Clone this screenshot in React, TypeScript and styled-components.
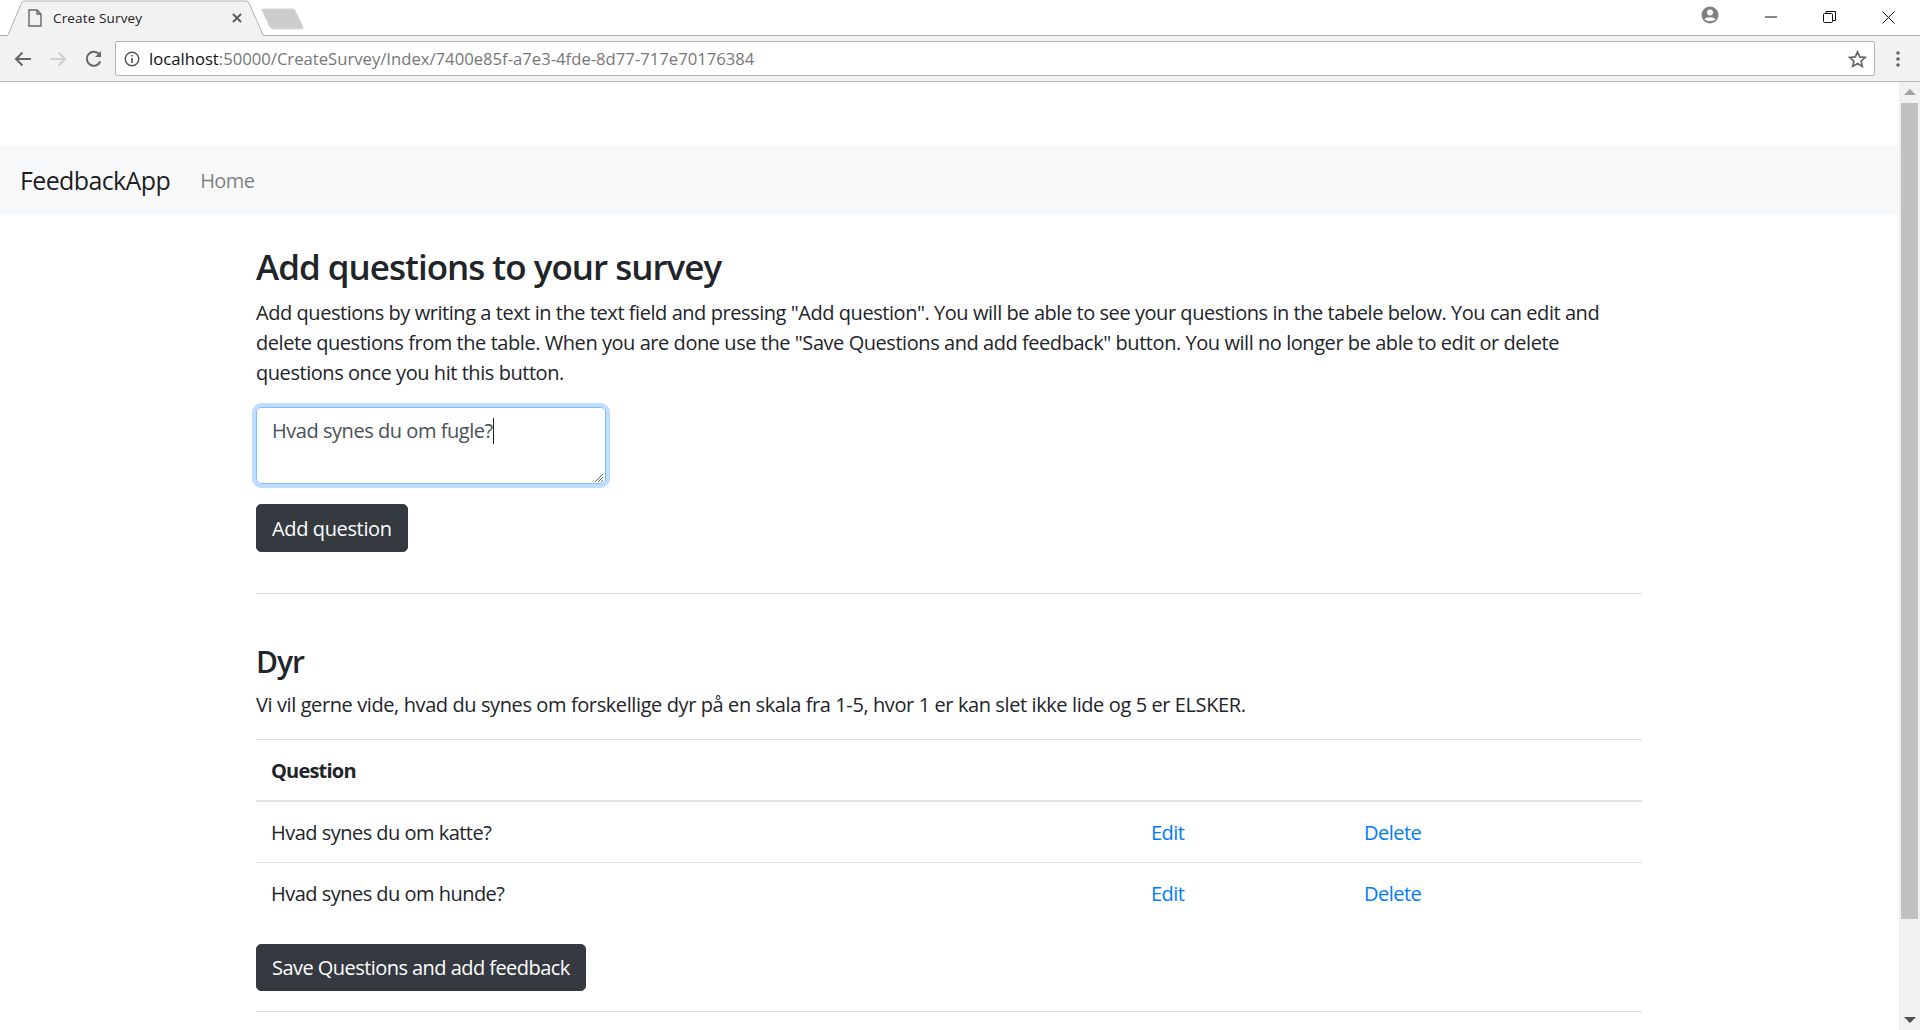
import * as React from 'react';
import styled, { createGlobalStyle } from 'styled-components';

const GlobalStyle = createGlobalStyle`
  html, body {
    margin: 0;
    padding: 0;
    height: 100%;
    overflow: hidden;
    background: #fff;
  }
  * { box-sizing: border-box; }
  body {
    font-family: "Open Sans", "Noto Sans", "Liberation Sans", sans-serif;
    color: #212529;
  }
`;

const Window = styled.div`
  display: flex;
  flex-direction: column;
  width: 1920px;
  height: 1030px;
  overflow: hidden;
`;

const TabStrip = styled.div`
  display: flex;
  align-items: flex-start;
  height: 36px;
  border-bottom: 1px solid #b0b0b0;
  background: #fff;
  flex: none;
`;

const Tab = styled.div`
  position: relative;
  display: flex;
  align-items: center;
  width: 257px;
  height: 36px;
  margin-left: 7px;
  padding: 0 22px 0 21px;
  font-size: 13.5px;
  letter-spacing: 0.15px;
  color: #222;
`;

const TabShape = styled.svg`
  position: absolute;
  left: 0;
  top: 0;
`;

const TabContent = styled.div`
  position: relative;
  display: flex;
  align-items: center;
  width: 100%;
  gap: 11px;
`;

const TabTitle = styled.span`
  flex: 1;
`;

const NewTab = styled.svg`
  margin: 8px 0 0 -3px;
`;

const Spacer = styled.div`
  flex: 1;
`;

const WindowControls = styled.div`
  display: flex;
  align-items: center;
  height: 34px;
  padding-right: 25px;
`;

const ControlSlot = styled.div<{ $gap: number }>`
  display: flex;
  align-items: center;
  justify-content: center;
  margin-left: ${(p) => p.$gap}px;
  width: 14px;
  height: 32px;
`;

const AccountSlot = styled.div`
  width: 18px;
  height: 18px;
  margin-bottom: 5px;
`;

const Toolbar = styled.div`
  display: flex;
  align-items: center;
  height: 46px;
  flex: none;
  background: #f2f2f2;
  border-bottom: 1px solid #b8b8b8;
`;

const NavButtons = styled.div`
  display: flex;
  align-items: center;
  gap: 17px;
  padding-left: 14px;
  width: 115px;
`;

const AddressBar = styled.div`
  display: flex;
  align-items: center;
  width: 1760px;
  height: 35px;
  background: #fff;
  border: 1px solid #b4b4b4;
  border-radius: 2px;
  padding: 0 7px 0 8px;
  gap: 9px;
  font-size: 16.67px;
`;

const Url = styled.div`
  flex: 1;
  color: #777;
  white-space: nowrap;
`;

const UrlHost = styled.span`
  color: #111;
`;

const MenuSlot = styled.div`
  display: flex;
  justify-content: center;
  flex: 1;
`;

const Viewport = styled.div`
  display: flex;
  flex: 1;
  min-height: 0;
`;

const Page = styled.div`
  flex: 1;
  min-width: 0;
  padding-top: 63px;
  font-size: 20px;
  line-height: 30px;
`;

const NavBar = styled.nav`
  display: flex;
  align-items: center;
  height: 70px;
  padding: 0 20px;
  background: #f8f9fa;
`;

const Brand = styled.a`
  font-size: 25px;
  letter-spacing: -0.62px;
  color: rgba(0, 0, 0, 0.9);
  margin-right: 30px;
`;

const NavLink = styled.a`
  font-size: 20px;
  letter-spacing: -0.6px;
  margin-top: 2px;
  color: rgba(0, 0, 0, 0.5);
`;

const Container = styled.main`
  width: 1386px;
  margin-left: 256px;
  padding-top: 31px;
`;

const Title = styled.h1`
  margin: 0 0 10px;
  font-size: 35px;
  line-height: 42px;
  font-weight: 600;
  letter-spacing: -1px;
`;

const Text = styled.p<{ $ls: number }>`
  margin: 0 0 19px;
  letter-spacing: ${(p) => p.$ls}px;
`;

const TextAreaBox = styled.div`
  position: relative;
  display: block;
  width: 350px;
  height: 77px;
  padding: 8px 15px;
  border: 1px solid #80bdff;
  border-radius: 5px;
  box-shadow: 0 0 0 4px rgba(0, 123, 255, 0.25);
  color: #495057;
  letter-spacing: -0.46px;
`;

const Caret = styled.span`
  display: inline-block;
  width: 1px;
  height: 26px;
  background: #222;
  vertical-align: -6px;
`;

const Grip = styled.svg`
  position: absolute;
  right: 1px;
  bottom: 0;
`;

const DarkButton = styled.button<{ $h: number; $mb: number; $ls: number }>`
  display: block;
  height: ${(p) => p.$h}px;
  padding: 2px 15px 0;
  margin: 20px 0 ${(p) => p.$mb}px;
  background: #343a40;
  border: 1px solid #343a40;
  border-radius: 5px;
  color: #fff;
  font: inherit;
  letter-spacing: ${(p) => p.$ls}px;
`;

const Rule = styled.hr`
  height: 1px;
  margin: 0;
  border: 0;
  background: #dfdfdf;
`;

const SubTitle = styled.h2`
  margin: 50px 0 10px;
  font-size: 30px;
  line-height: 36px;
  font-weight: 600;
  letter-spacing: -1px;
`;

const Table = styled.table`
  width: 100%;
  border-collapse: collapse;
  table-layout: fixed;
  letter-spacing: -0.52px;

  tbody tr:first-child td {
    height: 62px;
  }
`;

const Th = styled.th`
  height: 61px;
  padding: 2px 15px 0;
  text-align: left;
  font-weight: 700;
  letter-spacing: -0.8px;
  border-top: 1px solid #dee2e6;
  border-bottom: 2px solid #dee2e6;
`;

const Td = styled.td`
  height: 61px;
  padding: 2px 15px 0;
  border-top: 1px solid #dee2e6;
`;

const TableLink = styled.a`
  color: #007bff;
`;

const ScrollBar = styled.div`
  display: flex;
  flex-direction: column;
  align-items: center;
  width: 21px;
  flex: none;
  background: #f1f1f1;
  padding-top: 7px;
`;

const ScrollThumb = styled.div`
  width: 17px;
  height: 816px;
  margin-top: 8px;
  background: #c1c1c1;
`;

const DownArrow = styled.svg`
  margin-top: auto;
  margin-bottom: 7px;
`;

const questions = ['Hvad synes du om katte?', 'Hvad synes du om hunde?'];

function App(): JSX.Element {
  return (
    <Window>
      <GlobalStyle />
      <TabStrip>
        <Tab>
          <TabShape width="257" height="36" viewBox="0 0 257 36">
            <path d="M0.5 36 L14.5 3 Q15.5 1 17.5 1 L239 1 Q241 1 242 3 L256.5 36 Z" fill="#f2f2f2" stroke="#b0b0b0" strokeWidth="1" />
            <rect x="1" y="35" width="255" height="1" fill="#f2f2f2" />
          </TabShape>
          <TabContent>
            <svg width="14" height="18" viewBox="0 0 14 18" fill="none" stroke="#666" strokeWidth="1.4">
              <path d="M1 1 H9 L13 5 V17 H1 Z M9 1 V5 H13" />
            </svg>
            <TabTitle>Create Survey</TabTitle>
            <svg width="10" height="10" viewBox="0 0 10 10" stroke="#555" strokeWidth="1.8">
              <path d="M1 1 L9 9 M9 1 L1 9" />
            </svg>
          </TabContent>
        </Tab>
        <NewTab width="43" height="22" viewBox="0 0 43 22">
          <path d="M2 1 H32 Q33 1 34 2.5 L42 19 Q42.5 21 40 21 H12 Q10 21 9 19 L1 2 Q1 1 2 1 Z" fill="#cdcdcd" stroke="#d6d6d6" />
        </NewTab>
        <Spacer />
        <WindowControls>
          <AccountSlot>
            <svg width="18" height="18" viewBox="0 0 18 18">
              <circle cx="9" cy="9" r="8.5" fill="#808080" />
              <circle cx="9" cy="6.6" r="3" fill="#fff" />
              <path d="M3.5 13.2 C5 10.5 13 10.5 14.5 13.2 C12.5 15.6 5.5 15.6 3.5 13.2 Z" fill="#fff" />
            </svg>
          </AccountSlot>
          <ControlSlot $gap={45}>
            <svg width="14" height="2" viewBox="0 0 14 2"><rect width="12" height="1" y="0.5" x="1" fill="#111" /></svg>
          </ControlSlot>
          <ControlSlot $gap={44}>
            <svg width="13" height="13" viewBox="0 0 13 13" fill="none" stroke="#111">
              <rect x="0.5" y="2.5" width="9" height="9" rx="1" />
              <path d="M3 2.5 V0.5 H12.5 V9.5 H9.5" />
            </svg>
          </ControlSlot>
          <ControlSlot $gap={45}>
            <svg width="13" height="13" viewBox="0 0 13 13" stroke="#111"><path d="M0.5 0.5 L12.5 12.5 M12.5 0.5 L0.5 12.5" /></svg>
          </ControlSlot>
        </WindowControls>
      </TabStrip>
      <Toolbar>
        <NavButtons>
          <svg width="18" height="16" viewBox="0 0 18 16" fill="none" stroke="#666" strokeWidth="2">
            <path d="M17 8 H2 M8.5 1.5 L2 8 L8.5 14.5" />
          </svg>
          <svg width="18" height="16" viewBox="0 0 18 16" fill="none" stroke="#d0d0d0" strokeWidth="2">
            <path d="M1 8 H16 M9.5 1.5 L16 8 L9.5 14.5" />
          </svg>
          <svg width="18" height="18" viewBox="-1 0 18 18" fill="none" stroke="#666" strokeWidth="2">
            <path d="M15.3 11.5 A7 7 0 1 1 14.5 4.6" />
            <path d="M16 1 V7 H10 Z" fill="#666" stroke="none" />
          </svg>
        </NavButtons>
        <AddressBar>
          <svg width="16" height="16" viewBox="0 0 16 16" fill="none" stroke="#555" strokeWidth="1.4">
            <circle cx="8" cy="8" r="6.8" />
            <path d="M8 7 V12 M8 4 V5.6" strokeWidth="1.6" />
          </svg>
          <Url>
            <UrlHost>localhost</UrlHost>:50000/CreateSurvey/Index/7400e85f-a7e3-4fde-8d77-717e70176384
          </Url>
          <svg width="19" height="18" viewBox="0 0 19 18" fill="none" stroke="#666" strokeWidth="1.7">
            <path d="M9.5 1.8 L11.7 6.9 L17.3 7.4 L13.1 11 L14.3 16.4 L9.5 13.6 L4.7 16.4 L5.9 11 L1.7 7.4 L7.3 6.9 Z" />
          </svg>
        </AddressBar>
        <MenuSlot>
          <svg width="4" height="16" viewBox="0 0 4 16" fill="#666">
            <circle cx="2" cy="2" r="1.8" />
            <circle cx="2" cy="8" r="1.8" />
            <circle cx="2" cy="14" r="1.8" />
          </svg>
        </MenuSlot>
      </Toolbar>
      <Viewport>
        <Page>
          <NavBar>
            <Brand>FeedbackApp</Brand>
            <NavLink>Home</NavLink>
          </NavBar>
          <Container>
            <Title>Add questions to your survey</Title>
            <Text $ls={-0.445}>
              Add questions by writing a text in the text field and pressing "Add question". You will be able to see your questions in the tabele below. You can edit and
              delete questions from the table. When you are done use the "Save Questions and add feedback" button. You will no longer be able to edit or delete
              questions once you hit this button.
            </Text>
            <TextAreaBox>
              Hvad synes du om fugle?<Caret />
              <Grip width="10" height="10" viewBox="0 0 10 10" stroke="#666">
                <path d="M1 9 L9 1 M4 9 L9 4 M7 9 L9 7" />
              </Grip>
            </TextAreaBox>
            <DarkButton $h={48} $mb={41} $ls={-0.37}>Add question</DarkButton>
            <Rule />
            <SubTitle>Dyr</SubTitle>
            <Text $ls={-0.4}>Vi vil gerne vide, hvad du synes om forskellige dyr på en skala fra 1-5, hvor 1 er kan slet ikke lide og 5 er ELSKER.</Text>
            <Table>
              <colgroup>
                <col style={{ width: 880 }} />
                <col style={{ width: 213 }} />
                <col />
              </colgroup>
              <thead>
                <tr>
                  <Th colSpan={3}>Question</Th>
                </tr>
              </thead>
              <tbody>
                {questions.map((question) => (
                  <tr key={question}>
                    <Td>{question}</Td>
                    <Td><TableLink>Edit</TableLink></Td>
                    <Td><TableLink>Delete</TableLink></Td>
                  </tr>
                ))}
              </tbody>
            </Table>
            <DarkButton $h={47} $mb={20} $ls={-0.55}>Save Questions and add feedback</DarkButton>
            <Rule />
          </Container>
        </Page>
        <ScrollBar>
          <svg width="12" height="6" viewBox="0 0 12 6"><path d="M6 0 L12 6 H0 Z" fill="#a3a3a3" /></svg>
          <ScrollThumb />
          <DownArrow width="12" height="6" viewBox="0 0 12 6"><path d="M0 0 H12 L6 6 Z" fill="#505050" /></DownArrow>
        </ScrollBar>
      </Viewport>
    </Window>
  );
}

export default App;
